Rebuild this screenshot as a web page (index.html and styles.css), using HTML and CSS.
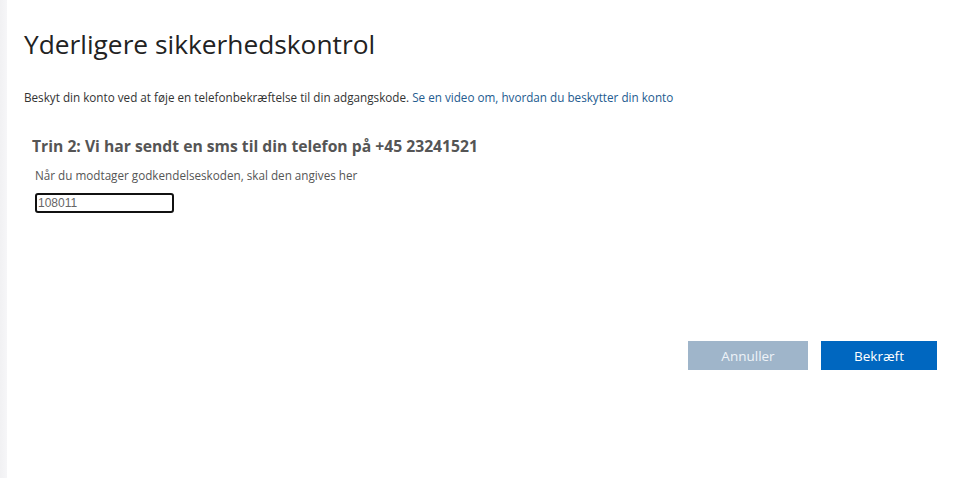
FILE: index.html
```html
<!DOCTYPE html>
<html lang="da">
<head>
<meta charset="utf-8">
<title>Yderligere sikkerhedskontrol</title>
<link rel="stylesheet" href="styles.css">
</head>
<body>
<div class="page">
  <div class="strip"></div>
  <main class="main">
    <h1 class="title">Yderligere sikkerhedskontrol</h1>
    <p class="intro">Beskyt din konto ved at føje en telefonbekræftelse til din adgangskode. <a class="link" href="#">Se en video om, hvordan du beskytter din konto</a></p>
    <section class="step">
      <h2 class="step-title">Trin 2: Vi har sendt en sms til din telefon på +45 23241521</h2>
      <p class="step-text">Når du modtager godkendelseskoden, skal den angives her</p>
      <input class="code" type="text" value="108011">
    </section>
    <div class="actions">
      <button class="btn btn-cancel" type="button">Annuller</button>
      <button class="btn btn-primary" type="button">Bekræft</button>
    </div>
  </main>
</div>
</body>
</html>
```
FILE: styles.css
```css
html, body {
  margin: 0;
  padding: 0;
  background: #fff;
}
body {
  font-family: "Open Sans", "Noto Sans", "Liberation Sans", sans-serif;
  color: #333;
}
.page {
  display: flex;
  min-height: 478px;
}
.strip {
  width: 7px;
  flex: none;
  background: linear-gradient(to right, #f1f1f3, #f6f6f8);
}
.main {
  flex: 1;
  padding: 26px 25px 0 17px;
}
.title {
  margin: 0;
  font-weight: 400;
  font-size: 26.3px;
  line-height: 36px;
  color: #222;
}
.intro {
  margin: 27px 0 0;
  font-size: 11.7px;
  line-height: 16px;
  color: #333;
}
.link {
  color: #245b8f;
  text-decoration: none;
}
.step {
  padding-left: 8px;
  margin-top: 30px;
}
.step-title {
  margin: 0;
  font-size: 15.7px;
  font-weight: 700;
  line-height: 22px;
  color: #555;
}
.step-text {
  margin: 10px 0 0 3px;
  font-size: 11.7px;
  line-height: 16px;
  color: #555;
}
.code {
  display: block;
  margin: 10px 0 0 3px;
  box-sizing: border-box;
  width: 139px;
  height: 20px;
  padding: 0 1px;
  border: 2px solid #111;
  border-radius: 3px;
  font-family: "Liberation Sans", sans-serif;
  font-size: 12px;
  color: #666;
  outline: none;
}
.actions {
  display: flex;
  justify-content: flex-end;
  gap: 13px;
  margin-top: 128px;
}
.btn {
  height: 29px;
  border: none;
  font-family: "Open Sans", "Noto Sans", sans-serif;
  font-size: 13.5px;
  color: #fff;
  padding: 0;
}
.btn-cancel {
  width: 120px;
  background: #9fb5ca;
  color: #eef3f8;
}
.btn-primary {
  width: 116px;
  background: #0067c0;
}
```
